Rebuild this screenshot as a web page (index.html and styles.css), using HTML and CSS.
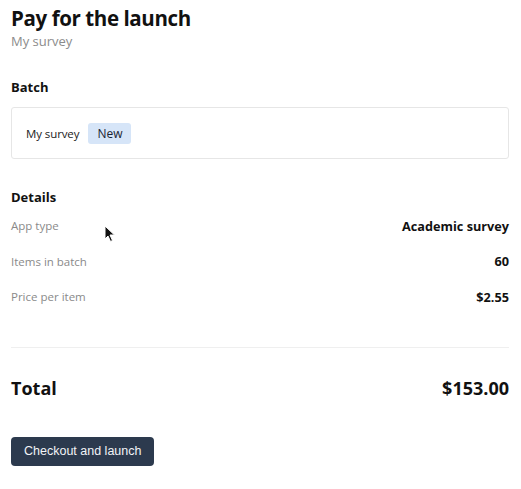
FILE: index.html
```html
<!DOCTYPE html>
<html>
<head>
<meta charset="utf-8">
<link rel="stylesheet" href="styles.css">
</head>
<body>
<main class="page">
  <header class="head">
    <h1 class="title">Pay for the launch</h1>
    <div class="subtitle">My survey</div>
  </header>

  <section class="section batch">
    <h2 class="section-title">Batch</h2>
    <div class="batch-box">
      <span class="batch-name">My survey</span>
      <span class="badge">New</span>
    </div>
  </section>

  <section class="section details">
    <h2 class="section-title">Details</h2>
    <div class="rows">
      <div class="row"><span class="label">App type</span><span class="value">Academic survey</span></div>
      <div class="row"><span class="label">Items in batch</span><span class="value">60</span></div>
      <div class="row"><span class="label">Price per item</span><span class="value">$2.55</span></div>
    </div>
  </section>

  <hr class="divider">

  <div class="total">
    <span>Total</span>
    <span>$153.00</span>
  </div>

  <button class="checkout">Checkout and launch</button>

  <svg class="cursor" width="12" height="18" viewBox="0 0 12 18"><path d="M1 1 L1 14 L4 11 L6.5 16.5 L8.5 15.5 L6 10 L10.5 10 Z" fill="#111" stroke="#fff" stroke-width="1"/></svg>
</main>
</body>
</html>
```
FILE: styles.css
```css
* { box-sizing: border-box; }
html, body { margin: 0; padding: 0; background: #fff; }
body {
  font-family: "Open Sans", "Noto Sans", sans-serif;
  color: #111;
}
.page {
  position: relative;
  padding: 5px 12px 0 11px;
  display: flex;
  flex-direction: column;
}
.title {
  margin: 0;
  font-size: 20.5px;
  font-weight: 700;
  line-height: 26px;
  letter-spacing: -0.4px;
}
.subtitle {
  font-size: 13px;
  color: #8c8c8c;
  line-height: 18px;
  margin-top: 1px;
}
.section-title {
  margin: 0;
  font-size: 13px;
  font-weight: 700;
  line-height: 18px;
}
.batch { margin-top: 28px; }
.batch-box {
  margin-top: 11px;
  border: 1px solid #e6e6e6;
  border-radius: 3px;
  height: 52px;
  display: flex;
  align-items: center;
  padding-left: 14px;
  gap: 9px;
}
.batch-name { font-size: 11.5px; color: #222; letter-spacing: -0.1px; }
.badge {
  background: #d6e5f8;
  border-radius: 3px;
  font-size: 12px;
  color: #1a2433;
  padding: 2px 9px;
  line-height: 17px;
}
.details { margin-top: 29px; }
.rows { display: flex; flex-direction: column; margin-top: 2px; }
.row {
  display: flex;
  justify-content: space-between;
  align-items: center;
  height: 35.5px;
}
.label { font-size: 11.5px; color: #8a8a8a; }
.value { font-size: 12.7px; font-weight: 700; color: #111; }
.divider {
  border: 0;
  border-top: 1px solid #efefef;
  margin: 32px 0 0;
}
.total {
  display: flex;
  justify-content: space-between;
  font-size: 18px;
  font-weight: 700;
  margin-top: 28px;
  line-height: 24px;
}
.checkout {
  align-self: flex-start;
  margin-top: 37px;
  background: #2c3a4e;
  color: #f2f4f7;
  border: 0;
  border-radius: 4px;
  font-family: "Liberation Sans", Arial, sans-serif;
  font-size: 12.5px;
  height: 29px;
  padding: 0 13px;
}
.cursor {
  position: absolute;
  left: 104px;
  top: 225px;
}
```
